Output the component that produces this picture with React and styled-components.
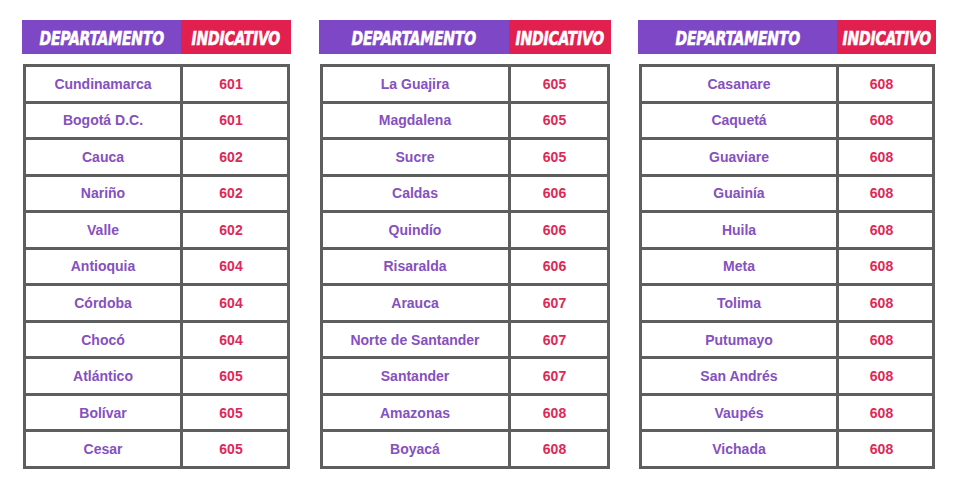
import styled, { createGlobalStyle } from 'styled-components';

const GlobalStyle = createGlobalStyle`
    * { box-sizing: border-box; }
    body {
        margin: 0;
        background: #ffffff;
        font-family: "Liberation Sans", Arial, sans-serif;
    }
`;

const tables = [
    {
        width: 269,
        dept: 159,
        rows: [
            ['Cundinamarca', '601'],
            ['Bogotá D.C.', '601'],
            ['Cauca', '602'],
            ['Nariño', '602'],
            ['Valle', '602'],
            ['Antioquia', '604'],
            ['Córdoba', '604'],
            ['Chocó', '604'],
            ['Atlántico', '605'],
            ['Bolívar', '605'],
            ['Cesar', '605'],
        ],
    },
    {
        width: 292,
        dept: 190,
        rows: [
            ['La Guajira', '605'],
            ['Magdalena', '605'],
            ['Sucre', '605'],
            ['Caldas', '606'],
            ['Quindío', '606'],
            ['Risaralda', '606'],
            ['Arauca', '607'],
            ['Norte de Santander', '607'],
            ['Santander', '607'],
            ['Amazonas', '608'],
            ['Boyacá', '608'],
        ],
    },
    {
        width: 298,
        dept: 199,
        rows: [
            ['Casanare', '608'],
            ['Caquetá', '608'],
            ['Guaviare', '608'],
            ['Guainía', '608'],
            ['Huila', '608'],
            ['Meta', '608'],
            ['Tolima', '608'],
            ['Putumayo', '608'],
            ['San Andrés', '608'],
            ['Vaupés', '608'],
            ['Vichada', '608'],
        ],
    },
];

export default function App() {
    return (
        <>
            <GlobalStyle />
            <Page>
                {tables.map((t, i) => (
                    <Block key={i} $width={t.width}>
                        <Header $dept={t.dept}>
                            <HeadCell $bg="#7d47c6">
                                <HeadText>DEPARTAMENTO</HeadText>
                            </HeadCell>
                            <HeadCell $bg="#e2204f">
                                <HeadText>INDICATIVO</HeadText>
                            </HeadCell>
                        </Header>
                        <Grid $dept={t.dept - 5}>
                            {t.rows.map(([name, code]) => (
                                <Row key={name}>
                                    <Cell $color="#8550c0">{name}</Cell>
                                    <Cell $color="#dd2957" $shift={8}>{code}</Cell>
                                </Row>
                            ))}
                        </Grid>
                    </Block>
                ))}
            </Page>
        </>
    );
}

const Page = styled.div`
    display: flex;
    gap: 27.5px;
    padding: 20px 0 0 22px;
    width: 967px;
    height: 496px;
`;

const Block = styled.div`
    width: ${p => p.$width}px;
    display: flex;
    flex-direction: column;
    gap: 10px;
`;

const Header = styled.div`
    display: grid;
    grid-template-columns: ${p => p.$dept}px 1fr;
    height: 34px;
`;

const HeadCell = styled.div`
    background: ${p => p.$bg};
    display: flex;
    align-items: center;
    justify-content: center;
    overflow: hidden;
`;

const HeadText = styled.span`
    display: inline-block;
    color: #ffffff;
    font-family: "DejaVu Sans Condensed", "DejaVu Sans", sans-serif;
    font-weight: 700;
    font-style: italic;
    font-size: 20px;
    letter-spacing: -0.3px;
    transform: scaleX(0.78);
    white-space: nowrap;
    padding-top: 1px;
    -webkit-text-stroke: 0.6px #ffffff;
`;

const Grid = styled.div`
    display: grid;
    grid-template-columns: ${p => p.$dept}px 1fr;
    grid-template-rows: repeat(11, 1fr);
    gap: 3px;
    height: 405px;
    margin: 0 1px;
    border: 3px solid #5e5e5e;
    background: #5e5e5e;
`;

const Row = styled.div`
    display: contents;
`;

const Cell = styled.div`
    background: #ffffff;
    color: ${p => p.$color};
    font-weight: 700;
    font-size: 14px;
    display: flex;
    align-items: center;
    justify-content: center;
    padding-right: ${p => p.$shift || 0}px;
    white-space: nowrap;
`;
